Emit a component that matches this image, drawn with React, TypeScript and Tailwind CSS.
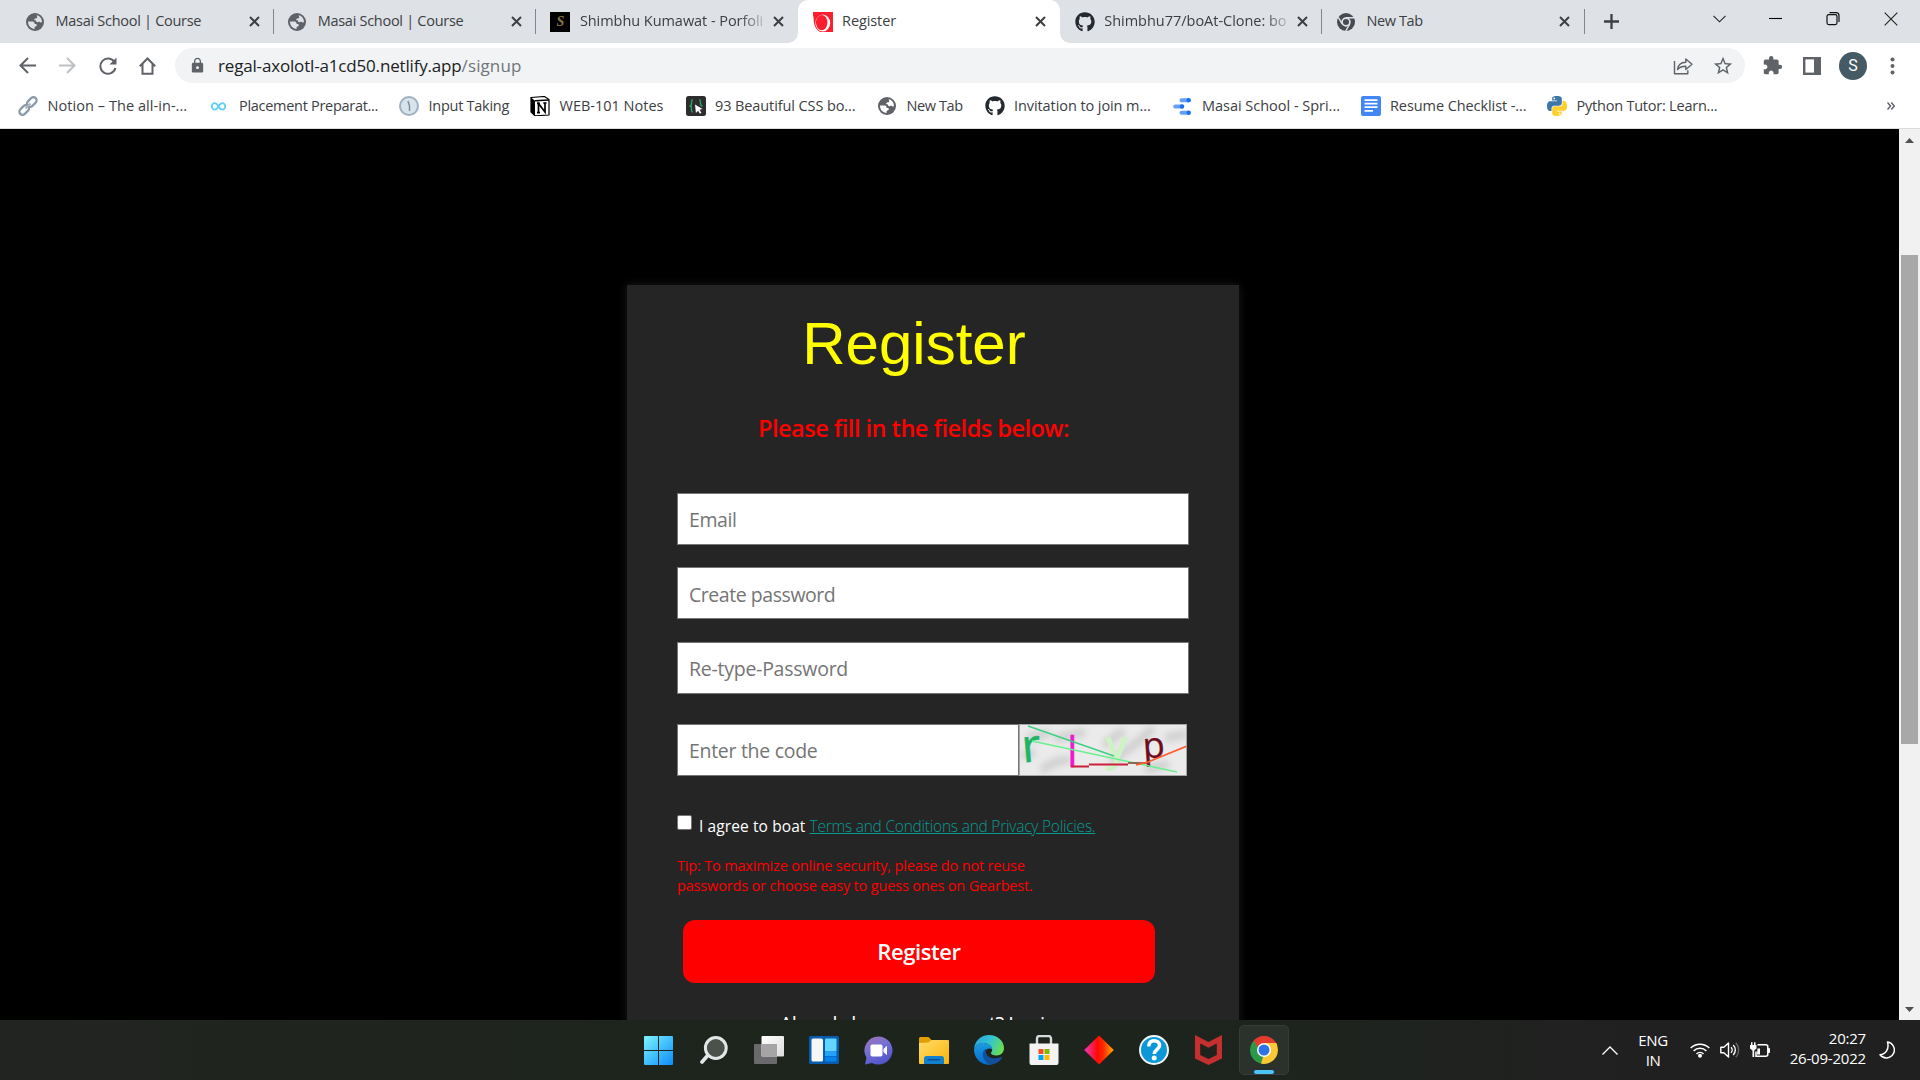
import type { ReactNode } from "react";
import { FaGithub } from "react-icons/fa";
import { MdLock, MdStarBorder, MdExtension } from "react-icons/md";

/* ---------- small drawings ---------- */

function CloseX() {
  return (
    <svg className="size-[11px]" viewBox="0 0 11 11" stroke="#3c4043" strokeWidth="2" fill="none">
      <path d="M1 1l9 9M10 1l-9 9" />
    </svg>
  );
}

function Globe({ light = "#dee1e6" }: { light?: string }) {
  return (
    <svg className="size-[18px]" viewBox="0 0 18 18">
      <circle cx="9" cy="9" r="9" fill="#5f6368" />
      <path d="M10.800 2.200c3 .7 5.200 3.300 5.200 6.600-.2.900-1.200 1-2 .4-.6-.5-1.200-.4-1.900-.1-1 .4-1.900.1-2-.9 0-.7-.5-1-1.200-1-.8 0-1-.8-.4-1.300.5-.4.900-.6 1.600-.5.700 0 1.200-.4 1.100-1.100 0-.8-.7-1.300-.4-2.100z" fill={light} />
      <path d="M2 8.600h4.300c1.300 0 2 .6 2.200 1.700.2.700.7.800 1.300.8.900.1 1.300.9.900 1.700-.3.500-.8.600-1.300.6-.7.100-.8.600-.8 1.100v1.500C4.800 15.900 2 12.800 2 8.600z" fill={light} />
    </svg>
  );
}

function GoldBadge() {
  return (
    <span className="flex size-5 items-center justify-center bg-black font-['Liberation_Serif',serif] text-[14px] font-bold italic leading-none text-[#8a7440]">
      S
    </span>
  );
}

function RingIcon() {
  return (
    <svg className="size-5" viewBox="0 0 20 20">
      <rect width="20" height="20" fill="#fb1e2e" />
      <path d="M0 3.500C1 6 .5 8 1 11c.5 3.500 2.500 7 6 9H0z" fill="#fff" />
      <ellipse cx="9.800" cy="11" rx="7.400" ry="8.600" fill="#fff" />
      <ellipse cx="8.700" cy="10.600" rx="5.800" ry="7.600" fill="#fb1e2e" />
    </svg>
  );
}

function ChromeMono() {
  return (
    <svg className="size-[18px]" viewBox="0 0 18 18">
      <circle cx="9" cy="9" r="9" fill="#474b4f" />
      <circle cx="9" cy="9" r="3.900" fill="#474b4f" stroke="#dee1e6" strokeWidth="1.700" />
      <path d="M9 4.700h8M5.300 11.200L1.300 4.400M12.700 11.200l-4 6.800" stroke="#dee1e6" strokeWidth="1.400" />
    </svg>
  );
}

function LinkIcon() {
  return (
    <svg className="size-5" viewBox="0 0 20 20" fill="none" stroke="#8b9aa8" strokeWidth="2.200">
      <rect x="8.300" y="2.800" width="11" height="6.400" rx="3.200" transform="rotate(-45 13.800 6)" />
      <rect x=".7" y="10.800" width="11" height="6.400" rx="3.200" transform="rotate(-45 6.200 14)" />
      <path d="M7.500 12.500l5-5" stroke="#a9b6c2" />
    </svg>
  );
}

function InfinityIcon() {
  return (
    <svg className="-ml-[3px] w-[15px] h-[9px]" viewBox="0 0 15 9" fill="none" stroke="#5fcdf5" strokeWidth="1.800">
      <path d="M7.500 4.500C6 2 5 1.200 3.800 1.200a2.900 3.200 0 000 6.500C5 7.700 6 7 7.500 4.500S10 1.200 11.200 1.200a2.900 3.200 0 010 6.500C10 7.700 9 7 7.500 4.500z" />
    </svg>
  );
}

function DialIcon() {
  return (
    <svg className="size-5" viewBox="0 0 20 20">
      <circle cx="10" cy="10" r="9" fill="#d9e3ec" stroke="#9fb0bf" strokeWidth="2" />
      <path d="M9 5l1.500 5v5" stroke="#7e8e9c" strokeWidth="1.500" fill="none" />
    </svg>
  );
}

function NotionIcon() {
  return (
    <svg className="size-5" viewBox="0 0 20 20">
      <path d="M1 1.500L14.500.5 19 3.500V19l-14 .8L1 16z" fill="#fff" stroke="#000" strokeWidth="1.200" />
      <path d="M1 1.500L5 4.800V19.800L1 16z" fill="#000" />
      <path d="M5 4.800L19 4" stroke="#000" strokeWidth="1.500" />
      <path d="M8.500 16.500V7.500l6.500 8.500V7M7 7.300h3M13.300 7h3.200M7 16.600h3" stroke="#000" strokeWidth="1.700" fill="none" />
    </svg>
  );
}

function BracesIcon() {
  return (
    <svg className="size-5" viewBox="0 0 20 20">
      <rect width="20" height="20" rx="2.500" fill="#2d2d2f" />
      <path d="M7 4C5 4 5.500 6 5.500 7.500S5 10 3.500 10C5 10 5.500 11 5.500 12.500S5 16 7 16M13 4c2 0 1.500 2 1.500 3.500S15 10 16.500 10" fill="none" stroke="#2f9e5f" strokeWidth="1.400" />
      <path d="M9 8.500l7.500 4.500-3 .8 1.900 3-1.400.9-1.900-3-2.200 2.200z" fill="#fff" />
    </svg>
  );
}

function DataIcon() {
  return (
    <svg className="-ml-[2px] w-[18px] h-[17px]" viewBox="0 0 18 17">
      <g strokeWidth="4" strokeLinecap="round" stroke="#669df6">
        <path d="M8.500 2.200h7M2.200 8.500h7M8.500 14.800h7" />
      </g>
      <g fill="#1a73e8">
        <circle cx="15.700" cy="2.200" r="2.200" />
        <circle cx="9" cy="8.500" r="2.200" />
        <circle cx="15.700" cy="14.800" r="2.200" />
      </g>
    </svg>
  );
}

function DocsIcon() {
  return (
    <svg className="size-5" viewBox="0 0 20 20">
      <rect width="20" height="20" rx="2" fill="#4285f4" />
      <path d="M3.500 4.200h13M3.500 7.700h13M3.500 11.200h13M3.500 14.800h8.500" stroke="#fff" strokeWidth="1.700" />
    </svg>
  );
}

function PythonIcon() {
  return (
    <svg className="size-5" viewBox="0 0 24 24">
      <path fill="#3d77a8" d="M11.914 0C5.820 0 6.200 2.656 6.200 2.656l.007 2.752h5.814v.826H3.900S0 5.789 0 11.969c0 6.180 3.403 5.960 3.403 5.960h2.030v-2.867s-.109-3.420 3.350-3.420h5.766s3.240.052 3.240-3.148V3.202S18.280 0 11.913 0z" />
      <path fill="#fdd02f" d="M12.087 24c6.092 0 5.712-2.656 5.712-2.656l-.007-2.752h-5.814v-.826h8.123s3.900.445 3.900-5.735c0-6.180-3.404-5.960-3.404-5.960h-2.030v2.867s.109 3.420-3.350 3.420H9.452s-3.240-.052-3.240 3.148v5.292S5.720 24 12.087 24z" />
      <circle cx="8.700" cy="2.900" r="1.100" fill="#fff" />
      <circle cx="15.300" cy="21.100" r="1.100" fill="#fff" />
    </svg>
  );
}

/* ---------- browser chrome ---------- */

function Tab({ icon, title, trackClass, active, fade, sep = true }: {
  icon: ReactNode;
  title: string;
  trackClass: string;
  active?: boolean;
  fade?: boolean;
  sep?: boolean;
}) {
  return (
    <div className={`relative flex h-[43px] w-[262.200px] shrink-0 items-center pl-[14.500px] pr-[13px] ${active ? "rounded-t-[10px] bg-white" : ""}`}>
      <span className="flex w-5 shrink-0 items-center">{icon}</span>
      <span
        className={`mb-[2px] ml-[9.500px] w-[186px] shrink-0 whitespace-nowrap text-[14.500px] leading-[22px] text-[#3c4043] ${trackClass} ${fade ? "[mask-image:linear-gradient(to_right,#000_86%,transparent_102%)]" : ""}`}
      >
        {title}
      </span>
      <span className="ml-[7px] flex shrink-0 items-center">
        <CloseX />
      </span>
      {sep && <span className="absolute right-0 top-[9px] h-[25px] w-px bg-[#80868b]" />}
      {active && (
        <>
          <span className="absolute -left-[10px] bottom-0 size-[10px] bg-[radial-gradient(circle_at_0_0,transparent_9.500px,#fff_10px)]" />
          <span className="absolute -right-[10px] bottom-0 size-[10px] bg-[radial-gradient(circle_at_100%_0,transparent_9.500px,#fff_10px)]" />
        </>
      )}
    </div>
  );
}

function TabStrip() {
  return (
    <div className="flex h-[43px] items-center bg-[#dee1e6] pl-[11.500px]">
      <Tab icon={<Globe />} title="Masai School | Course" trackClass="tracking-[-0.28px]" />
      <Tab icon={<Globe />} title="Masai School | Course" trackClass="tracking-[-0.28px]" />
      <Tab icon={<GoldBadge />} title="Shimbhu Kumawat - Porfoli" trackClass="tracking-[-0.05px]" fade sep={false} />
      <Tab icon={<RingIcon />} title="Register" trackClass="tracking-[-0.1px]" active sep={false} />
      <Tab icon={<FaGithub className="size-5 text-[#24292f]" />} title="Shimbhu77/boAt-Clone: bo" trackClass="tracking-[-0.02px]" fade />
      <Tab icon={<ChromeMono />} title="New Tab" trackClass="tracking-[-0.4px]" />
      <svg className="ml-[19px] size-[15px]" viewBox="0 0 15 15" stroke="#3c4043" strokeWidth="2.300">
        <path d="M7.500 0v15M0 7.500h15" />
      </svg>
      <div className="mb-[6px] ml-auto mr-[22px] flex items-center">
        <svg className="mr-[43px] w-[13px] h-[8px]" viewBox="0 0 13 8" fill="none" stroke="#222" strokeWidth="1.100">
          <path d="M.5.800l6 6 6-6" />
        </svg>
        <svg className="mr-[44px] w-[13px] h-[14px]" viewBox="0 0 13 14" stroke="#000" strokeWidth="1.100">
          <path d="M0 6.500h13" />
        </svg>
        <svg className="mr-[44px] w-[14px] h-[14px]" viewBox="0 0 14 14" fill="none" stroke="#111" strokeWidth="1.200">
          <rect x="1" y="2.600" width="10" height="10" rx="1.800" />
          <path d="M3.500 .7h6.500a3 3 0 013 3V10" />
        </svg>
        <svg className="size-[14px]" viewBox="0 0 14 14" stroke="#222" strokeWidth="1.100">
          <path d="M.7.700l12.600 12.600M13.300.700L.7 13.300" />
        </svg>
      </div>
    </div>
  );
}

function Toolbar() {
  return (
    <div className="flex h-[45px] items-center bg-white pl-[19px] pr-[25px]">
      <svg className="size-[17px]" viewBox="0 0 17 17" fill="none" stroke="#5f6368" strokeWidth="2">
        <path d="M17 8.500H1.800M9 1L1.500 8.500 9 16" />
      </svg>
      <svg className="ml-[23px] size-[17px]" viewBox="0 0 17 17" fill="none" stroke="#bdc1c6" strokeWidth="2">
        <path d="M0 8.500h15.200M8 1l7.500 7.500L8 16" />
      </svg>
      <svg className="ml-[23px] size-[18px]" viewBox="0 0 18 18" fill="none" stroke="#5f6368" strokeWidth="2">
        <path d="M15.500 5.200A7.600 7.600 0 1016.400 11" />
        <path d="M17.500.500v7h-7z" fill="#5f6368" stroke="none" />
      </svg>
      <svg className="ml-[22px] w-[17px] h-[18px]" viewBox="0 0 17 18" fill="none" stroke="#5f6368" strokeWidth="2">
        <path d="M.8 9.200L8.500 1.500l7.700 7.700M3.500 7v9.800h10V7" />
      </svg>
      <div className="ml-[19px] flex h-[35px] w-[1570px] items-center rounded-full bg-[#f1f3f4] pl-[14px] pr-[11px]">
        <MdLock className="size-[17px] text-[#5f6368]" />
        <span className="ml-[12px] whitespace-nowrap text-[17px] tracking-[-0.17px] text-[#202124]">
          regal-axolotl-a1cd50.netlify.app
          <span className="tracking-[0.1px] text-[#70757a]">/signup</span>
        </span>
        <svg className="ml-auto size-[20px]" viewBox="0 0 20 20" fill="none" stroke="#5f6368" strokeWidth="1.400" strokeLinejoin="round">
          <path d="M1.500 5v12.700h13.300v-3.500" />
          <path d="M4.500 13.500C5 9 8 6.500 12.800 6.300V3l6.200 5.300-6.200 5.200v-3.200c-3.800 0-6.300.8-8.300 3.200z" />
        </svg>
        <MdStarBorder className="ml-[19px] size-[22px] text-[#5f6368]" />
      </div>
      <MdExtension className="ml-[17px] size-[21px] text-[#5f6368]" />
      <svg className="ml-[20px] size-[18px]" viewBox="0 0 18 18">
        <rect x="1.200" y="1.200" width="15.600" height="15.600" fill="#fff" stroke="#5f6368" strokeWidth="2.400" />
        <rect x="11" y="1" width="6" height="16" fill="#5f6368" />
      </svg>
      <span className="ml-[18px] flex size-[28px] items-center justify-center rounded-full bg-[#455a64] pt-px font-[Roboto,sans-serif] text-[16px] leading-none text-white">
        S
      </span>
      <svg className="ml-auto w-[5px] h-[18px]" viewBox="0 0 5 18" fill="#5f6368">
        <circle cx="2.500" cy="2.500" r="2" />
        <circle cx="2.500" cy="9" r="2" />
        <circle cx="2.500" cy="15.500" r="2" />
      </svg>
    </div>
  );
}

const bookmarks: { icon: ReactNode; label: string; cls: string }[] = [
  { icon: <LinkIcon />, label: "Notion – The all-in-...", cls: "w-[191.500px] tracking-[0.06px]" },
  { icon: <InfinityIcon />, label: "Placement Preparat...", cls: "w-[189.500px] tracking-[-0.29px]" },
  { icon: <DialIcon />, label: "Input Taking", cls: "w-[131px] tracking-[-0.26px]" },
  { icon: <NotionIcon />, label: "WEB-101 Notes", cls: "w-[155.500px] tracking-[0px]" },
  { icon: <BracesIcon />, label: "93 Beautiful CSS bo...", cls: "w-[191.500px] tracking-[-0.1px]" },
  { icon: <Globe light="#fff" />, label: "New Tab", cls: "w-[107.500px] tracking-[-0.4px]" },
  { icon: <FaGithub className="size-5 text-[#24292f]" />, label: "Invitation to join m...", cls: "w-[188px] tracking-[-0.08px]" },
  { icon: <DataIcon />, label: "Masai School - Spri...", cls: "w-[188px] tracking-[-0.02px]" },
  { icon: <DocsIcon />, label: "Resume Checklist -...", cls: "w-[186.500px] tracking-[-0.08px]" },
  { icon: <PythonIcon />, label: "Python Tutor: Learn...", cls: "w-[190px] tracking-[-0.22px]" },
];

function BookmarksBar() {
  return (
    <div className="flex h-[41px] items-center border-b border-[#dadce0] bg-white pb-[4px] pl-[18px] pr-[25px] text-[14.500px] text-[#3c4043]">
      {bookmarks.map((b) => (
        <div key={b.label} className={`flex shrink-0 items-center whitespace-nowrap ${b.cls}`}>
          <span className="mr-[9.500px] flex w-5 justify-center">{b.icon}</span>
          {b.label}
        </div>
      ))}
      <svg className="ml-auto size-[8px]" viewBox="0 0 8 8" fill="none" stroke="#5f6368" strokeWidth="1.500">
        <path d="M.5.500L3.500 4 .5 7.500M4.300.500L7.300 4l-3 3.500" />
      </svg>
    </div>
  );
}

/* ---------- sign-up page ---------- */

function Captcha() {
  return (
    <svg className="w-[168px] h-[52px]" viewBox="0 0 168 52">
      <defs>
        <filter id="soft" x="-20%" y="-20%" width="140%" height="140%">
          <feGaussianBlur stdDeviation="3.500" />
        </filter>
      </defs>
      <rect width="168" height="52" fill="#ebebeb" />
      <g fill="none" stroke="#cdcdcd" strokeWidth="8" filter="url(#soft)">
        <path d="M8 14l22-5M36 16c10-5 16-4 30-8M2 32l14-4M22 46c14-8 16-10 30-10M84 20c10 0 8-10 22-12M92 40c12-14 28-20 42-36M126 46l24-6M146 14l22-4" />
      </g>
      <g className="font-['Open_Sans',sans-serif]">
        <text x="4" y="38" fill="#20b468" stroke="#20b468" strokeWidth=".6" fontSize="46" transform="rotate(-5 10 38)">r</text>
        <text x="48" y="43" fill="#f018d0" stroke="#f018d0" strokeWidth=".3" fontSize="42">l</text>
        <text x="87.500" y="36" fill="#cdf3c4" stroke="#cdf3c4" strokeWidth="1.600" fontSize="40">y</text>
        <text x="124.500" y="34" fill="#6b0d1d" stroke="#6b0d1d" strokeWidth=".3" fontSize="36" transform="rotate(-4 130 34)">p</text>
      </g>
      <g fill="none" strokeWidth="1.500">
        <path d="M9 2l86 30" stroke="#3fcf85" />
        <path d="M13 17l145 31" stroke="#6bf090" />
        <path d="M52 42.500h18M70 40.500h39" stroke="#cc1f3a" strokeWidth="1.900" />
        <path d="M109 39h22" stroke="#8a3a30" strokeWidth="1.500" />
        <path d="M117 41l12-3 39-16" stroke="#ff5a30" strokeWidth="1.800" />
      </g>
      <rect x=".5" y=".5" width="167" height="51" fill="none" stroke="#a5a5a5" />
    </svg>
  );
}

const field =
  "block h-[52px] border border-[#767676] bg-white pl-[11px] text-[19.500px] text-black placeholder:text-[#757575] placeholder:opacity-100 outline-none";

function SignupCard() {
  return (
    <div className="ml-[627px] mt-[156px] h-[800px] w-[612px] shrink-0 bg-[#252525] pl-[50px] shadow-[0_0_9px_#1a1a1a]">
      <h1 className="w-[474px] pt-[29px] text-center font-['Liberation_Sans',Arial,sans-serif] text-[60px] leading-[60px] text-[#ffff00]">
        Register
      </h1>
      <p className="mt-[39px] w-[473px] whitespace-nowrap text-center text-[23.500px] font-semibold leading-[30px] tracking-[-0.5px] text-[#ff0000]">
        Please fill in the fields below:
      </p>
      <input className={`${field} mt-[50px] w-[512px] tracking-[-0.42px]`} placeholder="Email" />
      <input className={`${field} mt-[22px] w-[512px] pt-[2px] tracking-[-0.45px]`} placeholder="Create password" />
      <input className={`${field} mt-[23px] w-[512px] tracking-[-0.25px]`} placeholder="Re-type-Password" />
      <div className="mt-[30px] flex">
        <input className={`${field} w-[342px] tracking-[-0.3px]`} placeholder="Enter the code" />
        <Captcha />
      </div>
      <div className="mt-[38px] flex h-[22px] items-center whitespace-nowrap text-[15.500px] leading-[22px]">
        <span className="mb-[5px] size-[15px] rounded-[2px] border border-[#767676] bg-white" />
        <span className="ml-[7px] mt-px font-medium tracking-[0.1px] text-white">I agree to boat</span>
        <a className="ml-[4px] mt-px font-light tracking-[-0.23px] text-[#0a9a94] underline">
          Terms and Conditions and Privacy Policies.
        </a>
      </div>
      <p className="mt-[20px] whitespace-nowrap text-[14.500px] leading-[20px] tracking-[-0.17px] text-[#ff0000]">
        Tip: To maximize online security, please do not reuse
        <br />
        passwords or choose easy to guess ones on Gearbest.
      </p>
      <button className="ml-[6px] mt-[24px] flex h-[63px] w-[472px] items-center justify-center rounded-[12px] bg-[#ff0000] text-[22px] font-semibold tracking-[-0.4px] text-white">
        Register
      </button>
      <p className="mt-[27px] w-[482px] whitespace-nowrap text-center text-[20px] font-medium leading-[28px] tracking-[-0.53px] text-white">
        Already have an account? Login
      </p>
    </div>
  );
}

function Scrollbar() {
  return (
    <div className="flex w-[21px] shrink-0 flex-col items-center bg-[#f1f1f1] pl-[1px] pr-[1px]">
      <svg className="mt-[9px] w-[9px] h-[5px] shrink-0" viewBox="0 0 9 5" fill="#505050">
        <path d="M0 5L4.500 0 9 5z" />
      </svg>
      <div className="mt-[112px] h-[489px] w-[17px] bg-[#a8a8a8]" />
      <svg className="mb-[8px] mt-auto w-[9px] h-[5px] shrink-0" viewBox="0 0 9 5" fill="#505050">
        <path d="M0 0l4.500 5L9 0z" />
      </svg>
    </div>
  );
}

/* ---------- taskbar ---------- */

const apps: { name: string; art: ReactNode }[] = [
  {
    name: "start",
    art: (
      <svg className="size-[29px]" viewBox="0 0 29 29">
        <defs>
          <linearGradient id="win" x1="0" y1="0" x2="1" y2="1">
            <stop offset="0" stopColor="#7df3ff" />
            <stop offset="1" stopColor="#0a8dfb" />
          </linearGradient>
        </defs>
        <path d="M1 0h13v14H0V1a1 1 0 011-1zM15 0h13a1 1 0 011 1v13H15zM0 15h14v14H1a1 1 0 01-1-1zM15 15h14v13a1 1 0 01-1 1H15z" fill="url(#win)" />
      </svg>
    ),
  },
  {
    name: "search",
    art: (
      <svg className="size-[28px]" viewBox="0 0 28 28" fill="none" stroke="#e4e7e8" strokeLinecap="round">
        <path d="M8.500 18.500L2 26" strokeWidth="3.600" />
        <circle cx="15.800" cy="12" r="10.400" fill="#4a524a" strokeWidth="3" />
      </svg>
    ),
  },
  {
    name: "task-view",
    art: (
      <svg className="w-[30px] h-[28px]" viewBox="0 0 30 28">
        <defs>
          <linearGradient id="tv" x1="0" y1="0" x2="1" y2="1">
            <stop offset="0" stopColor="#fff" />
            <stop offset="1" stopColor="#dcdcdc" />
          </linearGradient>
        </defs>
        <rect y="8" width="23" height="20" rx="1" fill="#6a696b" />
        <rect x="7.500" y="0" width="22.500" height="20.500" rx="1" fill="url(#tv)" />
        <path d="M7.500 8H23v12.500H7.500z" fill="#a5a5a5" />
      </svg>
    ),
  },
  {
    name: "widgets",
    art: (
      <svg className="w-[30px] h-[28px]" viewBox="0 0 30 28">
        <rect width="30" height="28" rx="1.500" fill="#0a5cae" />
        <rect x="2.500" y="2.500" width="11.500" height="23" rx="1.500" fill="#f6f6f6" />
        <rect x="16" y="2.500" width="11.500" height="13" rx="1" fill="#62d4ff" />
        <rect x="16" y="15.500" width="11.500" height="4.500" fill="#22a2fb" />
        <rect x="16" y="20.500" width="11.500" height="5" rx="1" fill="#0584ef" />
      </svg>
    ),
  },
  {
    name: "chat",
    art: (
      <svg className="size-[29px]" viewBox="0 0 29 29">
        <defs>
          <linearGradient id="chat" x1="0" y1="0" x2=".5" y2="1">
            <stop offset="0" stopColor="#a070b0" />
            <stop offset=".45" stopColor="#7a72d4" />
            <stop offset="1" stopColor="#5257cc" />
          </linearGradient>
        </defs>
        <path d="M14.500.500a14 14 0 11-6.500 26.400L1 28.500l1.500-6.800A14 14 0 0114.500.500z" fill="url(#chat)" />
        <rect x="6.500" y="8.500" width="12" height="12" rx="1.800" fill="#fff" />
        <path d="M19.500 13l3.500-3.200v9.400L19.500 16z" fill="#fff" />
      </svg>
    ),
  },
  {
    name: "explorer",
    art: (
      <svg className="w-[30px] h-[27px]" viewBox="0 0 30 27">
        <defs>
          <linearGradient id="fold" x1="0" y1="0" x2="1" y2="1">
            <stop offset="0" stopColor="#ffdc69" />
            <stop offset="1" stopColor="#fbb40c" />
          </linearGradient>
        </defs>
        <path d="M0 1.500A1.500 1.500 0 011.500 0H9.500L13 3.500V8H0z" fill="#e0a106" />
        <path d="M0 6l9.500-.5L12.500 3H29a1 1 0 011 1v22a1 1 0 01-1 1H1a1 1 0 01-1-1z" fill="url(#fold)" />
        <path d="M5 27v-5.500A2.500 2.500 0 017.500 19h15a2.500 2.500 0 012.500 2.500V27z" fill="#1181cd" />
        <path d="M8.500 22.700h12.500" stroke="#0a4f96" strokeWidth="1.400" />
      </svg>
    ),
  },
  {
    name: "edge",
    art: (
      <svg className="size-[30px]" viewBox="0 0 30 30">
        <defs>
          <linearGradient id="e1" x1="0" y1=".3" x2="1" y2=".6">
            <stop offset="0" stopColor="#2aa7e0" />
            <stop offset=".5" stopColor="#35c3d2" />
            <stop offset="1" stopColor="#6be04a" />
          </linearGradient>
          <linearGradient id="e2" x1="0" y1="0" x2="0" y2="1">
            <stop offset="0" stopColor="#1b9de2" />
            <stop offset="1" stopColor="#0868c8" />
          </linearGradient>
        </defs>
        <path d="M0 14C.6 6 7 0 15 0c8.500 0 15 6 15 13 0 4.500-3 7.500-7.500 7.500-3.500 0-5.500-1.200-5.500-2.300 0-.9 1.200-1.400 1.200-3.700C18.200 11 14 8 9.500 8 5 8 1.500 10.500 0 14z" fill="url(#e1)" />
        <path d="M0 14.500C1 10.500 5 8 9.500 8c4.500 0 8.700 2.800 8.700 6.300-3-2-8.200.2-8.200 5.700s4 9.500 9 9.300A15 15 0 010 14.500z" fill="url(#e2)" />
        <path d="M12.500 13.500C9 15 8 19 9.500 22.800c1.700 4.300 5.500 6.900 9.500 6.500 4-1 7-3.300 9-6.600.3-.6-.2-1-.8-.7C20 25 13 22.500 12 17.500c-.2-1.500 0-2.900.5-4z" fill="#124f9c" />
      </svg>
    ),
  },
  {
    name: "store",
    art: (
      <svg className="size-[30px]" viewBox="0 0 30 30">
        <path d="M8 11V3.500A2.500 2.500 0 0110.500 1h9A2.500 2.500 0 0122 3.500V11" fill="none" stroke="#d8dadb" strokeWidth="2.400" />
        <path d="M.5 8.500h29V28a2 2 0 01-2 2h-25a2 2 0 01-2-2z" fill="#f3f3f3" />
        <path d="M9.500 14h5v5h-5z" fill="#f25022" />
        <path d="M15.500 14h5v5h-5z" fill="#7fba00" />
        <path d="M9.500 20h5v5h-5z" fill="#00a4ef" />
        <path d="M15.500 20h5v5h-5z" fill="#ffb900" />
      </svg>
    ),
  },
  {
    name: "diamond",
    art: (
      <svg className="size-[30px]" viewBox="0 0 30 30">
        <defs>
          <linearGradient id="dia">
            <stop offset=".05" stopColor="#f032b0" />
            <stop offset=".45" stopColor="#ff0a00" />
            <stop offset=".65" stopColor="#ff2a00" />
            <stop offset="1" stopColor="#ffb000" />
          </linearGradient>
        </defs>
        <path d="M15 .500L29.800 15 15 29.500.200 15z" fill="url(#dia)" />
      </svg>
    ),
  },
  {
    name: "help",
    art: (
      <svg className="size-[30px]" viewBox="0 0 30 30">
        <circle cx="15" cy="15" r="14" fill="#0b97d8" stroke="#f2f6f8" strokeWidth="2" />
        <path d="M9.800 11.500C9.800 7.500 12 5.700 15 5.700s5.500 1.800 5.500 4.800c0 4-5.300 4.300-5.300 8.500" fill="none" stroke="#fff" strokeWidth="3.600" />
        <circle cx="15.200" cy="23" r="2.500" fill="#fff" />
      </svg>
    ),
  },
  {
    name: "shield",
    art: (
      <svg className="w-[27px] h-[30px]" viewBox="0 0 27 30">
        <path d="M0 0l13.500 7L27 0v23.500L13.500 30 0 23.500z" fill="#c4302f" />
        <path d="M5.200 8.500l8.300 4.300 8.300-4.300v11.500l-8.300 4-8.300-4z" fill="#1f221d" />
      </svg>
    ),
  },
];

function ChromeIcon() {
  return (
    <svg className="size-[28px]" viewBox="0 0 28 28">
      <path d="M14 14L1.900 7A14 14 0 0126.100 7z" fill="#e33b2e" />
      <path d="M14 14l12.100-7A14 14 0 0114 28z" fill="#fcc934" />
      <path d="M14 14v14A14 14 0 011.900 7z" fill="#2a9a48" />
      <path d="M14 7h12.100a14 14 0 01.9 2L20 14z" fill="#fcc934" />
      <path d="M20.100 17.500L14 28a14 14 0 01-3-.4L14 18z" fill="#fcc934" />
      <path d="M7.900 17.500L1.900 7l4-3.500L10 12z" fill="#2a9a48" />
      <path d="M1.900 7A14 14 0 0126.100 7H14a7 7 0 00-6.500 4.500L4 4.300z" fill="#e33b2e" />
      <circle cx="14" cy="14" r="7" fill="#fff" />
      <circle cx="14" cy="14" r="5.500" fill="#2f72e8" />
    </svg>
  );
}

function Tray() {
  return (
    <div className="ml-auto flex items-center pr-[25px] text-[15px] leading-[20px] text-white">
      <svg className="w-[16px] h-[9px]" viewBox="0 0 16 9" fill="none" stroke="#fff" strokeWidth="1.300">
        <path d="M.5 8.500L8 1l7.500 7.500" />
      </svg>
      <div className="mb-[1px] ml-[20px] w-[30px] text-center tracking-[-0.4px]">
        ENG
        <br />
        IN
      </div>
      <svg className="ml-[22px] w-[20px] h-[16px]" viewBox="0 0 20 16" fill="none" stroke="#fff" strokeWidth="1.500">
        <path d="M.7 6a13.200 13.200 0 0118.600 0M3.600 9a9 9 0 0112.800 0M6.500 12a5 5 0 017 0" />
        <circle cx="10" cy="13.800" r="2" fill="#fff" stroke="none" />
      </svg>
      <svg className="ml-[10px] w-[20px] h-[18px]" viewBox="0 0 20 18" fill="none" stroke="#fff" strokeWidth="1.400" strokeLinejoin="round">
        <path d="M.8 6.300v5.400h3L8.500 16V2L3.800 6.300z" />
        <path d="M11 6.200a4 4 0 010 5.600M13.200 4a7 7 0 010 10" />
        <path d="M15.800 1.800a10.500 10.500 0 010 14.400" stroke="#666" />
      </svg>
      <svg className="ml-[10px] w-[20px] h-[16px]" viewBox="0 0 20 16">
        <path d="M7.500 2.700h8.300a2 2 0 012 2v7.600a2 2 0 01-2 2H6V9.500" fill="none" stroke="#fff" strokeWidth="1.500" />
        <rect x="18" y="6" width="2" height="5" rx=".8" fill="#fff" />
        <path d="M0 3h1V.300h1.500V3h1.500V.300h1.500V3h1v3.500L4.200 8.500V15H2.500V8.500L0 6.500z" fill="#fff" />
        <path d="M7.500 6.500H10v6H7z" fill="#fff" />
      </svg>
      <div className="mb-[4px] ml-[18px] w-[78px] whitespace-nowrap text-right tracking-[-0.2px]">
        20:27
        <br />
        26-09-2022
      </div>
      <svg className="ml-[13px] w-[16px] h-[18px]" viewBox="0 0 16 18" fill="none" stroke="#fff" strokeWidth="1.500" strokeLinejoin="round">
        <path d="M8.500 1a8 8 0 11-7.500 12.800C6.500 13.500 10.500 8 8.500 1z" />
      </svg>
    </div>
  );
}

function Taskbar() {
  return (
    <div className="flex h-[60px] items-center bg-[linear-gradient(to_right,#222421_0%,#1f251e_25%,#1c241c_45%,#1d241d_62%,#202020_85%,#202020_100%)] pl-[631px]">
      {apps.map((a) => (
        <div key={a.name} className="flex w-[55px] shrink-0 items-center justify-center">
          {a.art}
        </div>
      ))}
      <div className="relative ml-[3px] flex size-[50px] items-center justify-center rounded-[5px] border border-[#363d36] bg-[#2b322b]">
        <ChromeIcon />
        <span className="absolute bottom-0 h-[4px] w-[20px] rounded-full bg-[#4cc2ff]" />
      </div>
      <Tray />
    </div>
  );
}

export default function App() {
  return (
    <div className="flex h-[1080px] w-[1920px] flex-col overflow-hidden bg-black font-['Open_Sans','Noto_Sans',sans-serif]">
      <TabStrip />
      <Toolbar />
      <BookmarksBar />
      <div className="flex h-[891px] shrink-0 overflow-hidden">
        <div className="h-full flex-1 overflow-hidden bg-black">
          <SignupCard />
        </div>
        <Scrollbar />
      </div>
      <Taskbar />
    </div>
  );
}
